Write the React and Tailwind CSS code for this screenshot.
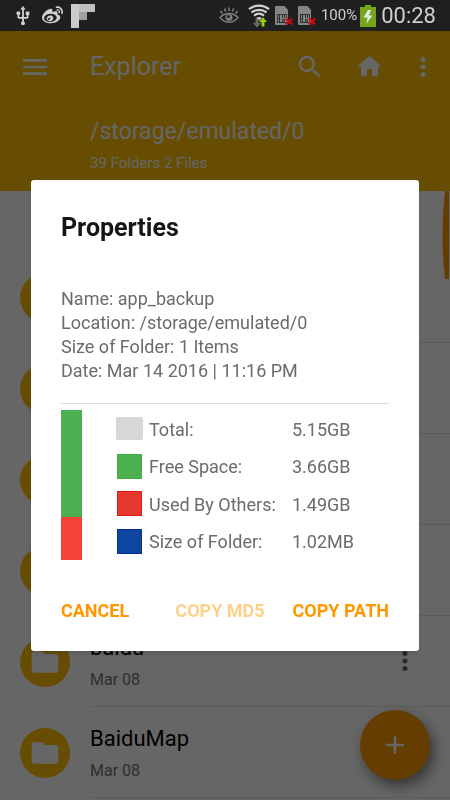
import React from "react";
import { MdMenu, MdSearch, MdHome, MdMoreVert, MdFolder, MdAdd, MdUsb } from "react-icons/md";
import { FaWeibo } from "react-icons/fa";

// rows without a name sit fully behind the dialog
const folders = [
  { id: 1 },
  { id: 2 },
  { id: 3 },
  { id: 4 },
  { id: 5, name: "baidu", date: "Mar 08" },
  { id: 6, name: "BaiduMap", date: "Mar 08" },
];

const storage = [
  { label: "Total:", value: "5.15GB", swatch: "h-[23px] w-[27px] rounded-[2px] bg-[#d6d8d8]" },
  { label: "Free Space:", value: "3.66GB", swatch: "ml-px size-[25px] border border-[#3fae44] bg-[#4caf50]" },
  { label: "Used By Others:", value: "1.49GB", swatch: "ml-px size-[25px] border border-[#e01a12] bg-[#e53930]" },
  { label: "Size of Folder:", value: "1.02MB", swatch: "ml-px size-[25px] border border-[#0a2c96] bg-[#0d47a1]" },
];

function EyeIcon() {
  return (
    <svg className="mr-1" width="20" height="17" viewBox="0 0 20 17" fill="none" stroke="#7d7d7d">
      <path d="M1 10.500C4 7.500 7 6.500 10 6.500s6 1 9 4C16 14 13.500 15.300 10 15.300S4 14 1 10.500Z" strokeWidth="1.400" />
      <circle cx="10" cy="10.500" r="3.500" fill="#7d7d7d" stroke="none" />
      <circle cx="9.500" cy="9.500" r="1.500" fill="#1f1f1f" stroke="none" />
      <path d="M10 .5v3.500M5.500 1.500l1.200 3M14.500 1.500L13.300 4.500M1.500 4l2 2.500M18.500 4l-2 2.500" strokeWidth="1.600" />
    </svg>
  );
}

function WifiIcon() {
  return (
    <svg width="22" height="24" viewBox="0 0 22 24" fill="none">
      <path d="M1 5.200C7 .4 15 .4 21 5.200" stroke="#d4d4d4" strokeWidth="2.300" />
      <path d="M3.500 8.400c4.500-3.500 10.500-3.500 15 0" stroke="#d4d4d4" strokeWidth="2.200" />
      <path d="M6 11.600c3-2.300 7-2.300 10 0" stroke="#d4d4d4" strokeWidth="2.100" />
      <path d="M11 16.500L8.200 14c1.700-1.300 3.900-1.300 5.600 0Z" fill="#d4d4d4" />
      <path d="M7.500 14.500h3v4.500H13l-4 4.500L5 19h2.500Z" fill="#6c6c6c" />
      <path d="M13.500 22.500V18H11l4-4.800 4 4.800h-2.500v4.500Z" fill="#8fd600" />
    </svg>
  );
}

function SimIcon() {
  return (
    <svg width="18" height="20" viewBox="0 0 18 20" fill="none">
      <path d="M0 1Q0 0 1 0h8.500L13 4v15H1q-1 0-1-1Z" fill="#868686" />
      <path d="M2 8.500h9.500M2.500 8v9M2 16.500h9.500M4.500 9v7M2.500 12.500h2M7.500 9v3M9.500 9v3M11.500 8v5M7.500 13.500h2v2h-2Z" stroke="#333" />
      <path d="M11 12.500l6 6M17 12.500l-6 6" stroke="#d40808" strokeWidth="2.200" />
    </svg>
  );
}

function BatteryIcon() {
  return (
    <svg width="16" height="22" viewBox="0 0 16 22">
      <path d="M5 0h6v2h5v20H0V2h5Z" fill="#76a51c" />
      <path d="M8 5L3.500 12.500h4L6.500 18.500 12.500 10.500H8.800L11 5Z" fill="#e8e8e8" />
    </svg>
  );
}

function StatusBar() {
  return (
    <div className="relative z-30 flex h-[31px] items-center justify-between bg-[#1f1f1f] pl-3 pr-[14px] text-[#cfcfcf]">
      <div className="flex items-center gap-2">
        <MdUsb size={22} />
        <FaWeibo size={21} />
        <svg width="24" height="24" viewBox="0 0 24 24">
          <path d="M0 0h8v24H0Z" fill="#cacaca" />
          <path d="M8 0h16v8H8Z" fill="#bfbfbf" />
          <path d="M8 8h8v8H8Z" fill="#a0a0a0" />
        </svg>
      </div>
      <div className="flex items-center gap-[5px]">
        <EyeIcon />
        <WifiIcon />
        <SimIcon />
        <SimIcon />
        <div className="flex items-center gap-[3px]">
          <span className="text-[15px]">100%</span>
          <BatteryIcon />
        </div>
        <span className="text-[22px]">00:28</span>
      </div>
    </div>
  );
}

function Header() {
  return (
    <header className="h-40 bg-[#ffc107] text-white">
      <div className="flex h-[71px] items-center pl-[19px] pr-3">
        <button aria-label="Menu" className="w-[71px]">
          <MdMenu size={32} />
        </button>
        <h1 className="flex-1 text-[25px]">Explorer</h1>
        <div className="flex items-center">
          <button aria-label="Search" className="mr-[30px]">
            <MdSearch size={30} />
          </button>
          <button aria-label="Home" className="mr-6">
            <MdHome size={29} />
          </button>
          <button aria-label="More">
            <MdMoreVert size={30} />
          </button>
        </div>
      </div>
      <div className="pl-[90px] pt-[14px]">
        <p className="text-[23px] leading-8">/storage/emulated/0</p>
        <p className="text-[15px] leading-[30px]">39 Folders 2 Files</p>
      </div>
    </header>
  );
}

function FolderRow({ folder }) {
  return (
    <li className="flex h-[91px] items-center pl-5">
      <span className="flex size-[50px] shrink-0 items-center justify-center rounded-full bg-[#ffc107] text-white">
        <MdFolder size={32} />
      </span>
      <div className="ml-5 flex h-full flex-1 items-center border-b border-[#e4e4e4]">
        {folder.name && (
          <>
            <div className="flex-1 pt-[6px]">
              <p className="text-[22px] leading-8 text-black">{folder.name}</p>
              <p className="text-base leading-8 text-[#757575]">{folder.date}</p>
            </div>
            {/* the add button covers the last row's menu */}
            {folder.id !== 6 && (
              <button aria-label="More" className="mr-[30px] text-[#616161]">
                <MdMoreVert size={30} />
              </button>
            )}
          </>
        )}
      </div>
    </li>
  );
}

function PropertiesDialog() {
  return (
    <div className="fixed inset-x-0 bottom-0 top-[31px] z-20 flex items-center justify-center bg-black/60 px-[31px]">
      <div
        role="dialog"
        aria-labelledby="title"
        className="w-full max-w-md rounded-[3px] bg-white px-[30px] pb-5 pt-8 text-lg text-[#6b6b6b] shadow-md"
      >
        <h2 id="title" className="text-[25px] font-bold leading-8 text-[#151515]">
          Properties
        </h2>
        <div className="mt-[43px] leading-6">
          <p>Name: app_backup</p>
          <p>Location: /storage/emulated/0</p>
          <p>Size of Folder: 1 Items</p>
          <p>Date: Mar 14 2016 | 11:16 PM</p>
        </div>
        <div className="mt-5 flex border-t border-[#dcdcdc] pt-[6px]">
          <div className="flex w-[21px] flex-col">
            <div className="flex-[107] bg-[#4caf50]" />
            <div className="flex-[43] bg-[#f44336]" />
          </div>
          <table className="ml-[34px] h-[150px] leading-6">
            <tbody>
              {storage.map((item) => (
                <tr key={item.label}>
                  <td className="w-[33px] p-0">
                    <div className={item.swatch} />
                  </td>
                  <td className="w-[143px] p-0 pt-[2px]">{item.label}</td>
                  <td className="p-0 pt-[2px]">{item.value}</td>
                </tr>
              ))}
            </tbody>
          </table>
        </div>
        <div className="mt-[31px] flex h-10 items-center font-bold text-[#ff9800]">
          <button className="mr-auto">CANCEL</button>
          <button className="mr-7 text-[#ffd08a]" disabled>
            COPY MD5
          </button>
          <button>COPY PATH</button>
        </div>
      </div>
    </div>
  );
}

function App() {
  return (
    <div className="relative h-screen overflow-hidden bg-white font-['Roboto',sans-serif]">
      <StatusBar />
      <Header />
      <svg className="absolute right-px top-[191px]" width="7" height="88" viewBox="0 0 7 88">
        <path d="M3 0h4v88H3Q-2 44 3 0Z" fill="#ff9800" />
      </svg>
      <ul className="pt-[61px]">
        {folders.map((folder) => (
          <FolderRow key={folder.id} folder={folder} />
        ))}
      </ul>
      <button
        aria-label="Add"
        className="fixed bottom-5 right-5 flex size-[70px] items-center justify-center rounded-full bg-[#ff9800] text-white shadow-[4px_6px_14px_rgba(0,0,0,0.5)]"
      >
        <MdAdd size={30} />
      </button>
      <PropertiesDialog />
    </div>
  );
}

export default App;
